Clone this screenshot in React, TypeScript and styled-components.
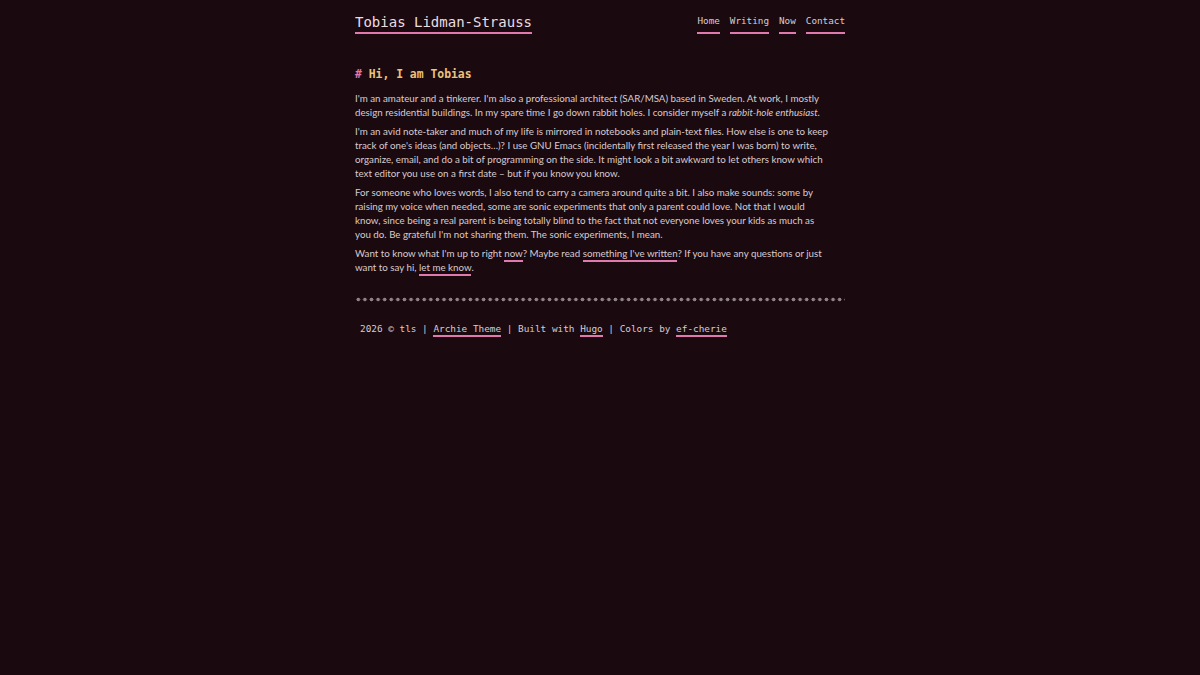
import React from "react"
import styled, { createGlobalStyle } from "styled-components"

const GlobalStyle = createGlobalStyle`
  html, body {
    margin: 0;
    padding: 0;
    background: #1a0a10;
  }
  body {
    font-family: Lato, "Noto Sans", sans-serif;
    color: #d8cacf;
  }
`

const Page = styled.div`
  width: 490px;
  margin: 0 auto;
  padding-top: 12px;
`

const Header = styled.header`
  display: flex;
  justify-content: space-between;
  align-items: flex-start;
`

const Title = styled.a`
  font-family: "DejaVu Sans Mono", "Liberation Mono", monospace;
  font-size: 14px;
  line-height: 20px;
  color: #eadde1;
  text-decoration: none;
  border-bottom: 2px solid #e07aae;
`

const Nav = styled.nav`
  display: flex;
  gap: 10px;
  padding-top: 2px;
`

const NavLink = styled.a`
  font-family: "DejaVu Sans Mono", "Liberation Mono", monospace;
  font-size: 9.3px;
  line-height: 14px;
  color: #d9ccd0;
  text-decoration: none;
  padding-bottom: 4px;
  border-bottom: 2px solid #e07aae;
`

const Main = styled.main`
  padding-top: 30px;
`

const Heading = styled.h1`
  margin: 0 0 7px;
  font-family: "DejaVu Sans Mono", "Liberation Mono", monospace;
  font-size: 11.4px;
  line-height: 20px;
  font-weight: bold;
  color: #ecc27c;
`

const Hash = styled.span`
  color: #e07aae;
`

const Para = styled.p`
  margin: 0 0 5px;
  font-size: 9.75px;
  line-height: 14px;
  color: #d8cacf;
`

const TextLink = styled.a`
  color: inherit;
  text-decoration: none;
  border-bottom: 2px solid #e07aae;
  padding-bottom: 1px;
`

const Rule = styled.hr`
  margin: 23px 0 0;
  border: none;
  height: 5px;
  background-image: radial-gradient(circle, #8f8186 1.7px, transparent 2.1px);
  background-size: 6.6px 5px;
  background-repeat: repeat-x;
`

const Footer = styled.footer`
  padding: 20px 5px;
  font-family: "DejaVu Sans Mono", "Liberation Mono", monospace;
  font-size: 9.4px;
  line-height: 14px;
  color: #d8cacf;
`

const FootLink = styled.a`
  color: inherit;
  text-decoration: none;
  padding-bottom: 1px;
  border-bottom: 2px solid #e07aae;
`

export default function App() {
  return (
    <>
      <GlobalStyle />
      <Page>
        <Header>
          <Title href="#">Tobias Lidman-Strauss</Title>
          <Nav>
            <NavLink href="#">Home</NavLink>
            <NavLink href="#">Writing</NavLink>
            <NavLink href="#">Now</NavLink>
            <NavLink href="#">Contact</NavLink>
          </Nav>
        </Header>
        <Main>
          <Heading>
            <Hash>#</Hash> Hi, I am Tobias
          </Heading>
          <Para>
            I'm an amateur and a tinkerer. I'm also a professional architect
            (SAR/MSA) based in Sweden. At work, I mostly
            <br />
            design residential buildings. In my spare time I go down rabbit
            holes. I consider myself a <em>rabbit-hole enthusiast</em>.
          </Para>
          <Para>
            I'm an avid note-taker and much of my life is mirrored in notebooks
            and plain-text files. How else is one to keep
            <br />
            track of one's ideas (and objects…)? I use GNU Emacs (incidentally
            first released the year I was born) to write,
            <br />
            organize, email, and do a bit of programming on the side. It might
            look a bit awkward to let others know which
            <br />
            text editor you use on a first date – but if you know you know.
          </Para>
          <Para>
            For someone who loves words, I also tend to carry a camera around
            quite a bit. I also make sounds: some by
            <br />
            raising my voice when needed, some are sonic experiments that only
            a parent could love. Not that I would
            <br />
            know, since being a real parent is being totally blind to the fact
            that not everyone loves your kids as much as
            <br />
            you do. Be grateful I'm not sharing them. The sonic experiments, I
            mean.
          </Para>
          <Para>
            Want to know what I'm up to right <TextLink href="#">now</TextLink>?
            Maybe read <TextLink href="#">something I've written</TextLink>? If
            you have any questions or just
            <br />
            want to say hi, <TextLink href="#">let me know</TextLink>.
          </Para>
        </Main>
        <Rule />
        <Footer>
          2026 © tls | <FootLink href="#">Archie Theme</FootLink> | Built with{" "}
          <FootLink href="#">Hugo</FootLink> | Colors by{" "}
          <FootLink href="#">ef-cherie</FootLink>
        </Footer>
      </Page>
    </>
  )
}
